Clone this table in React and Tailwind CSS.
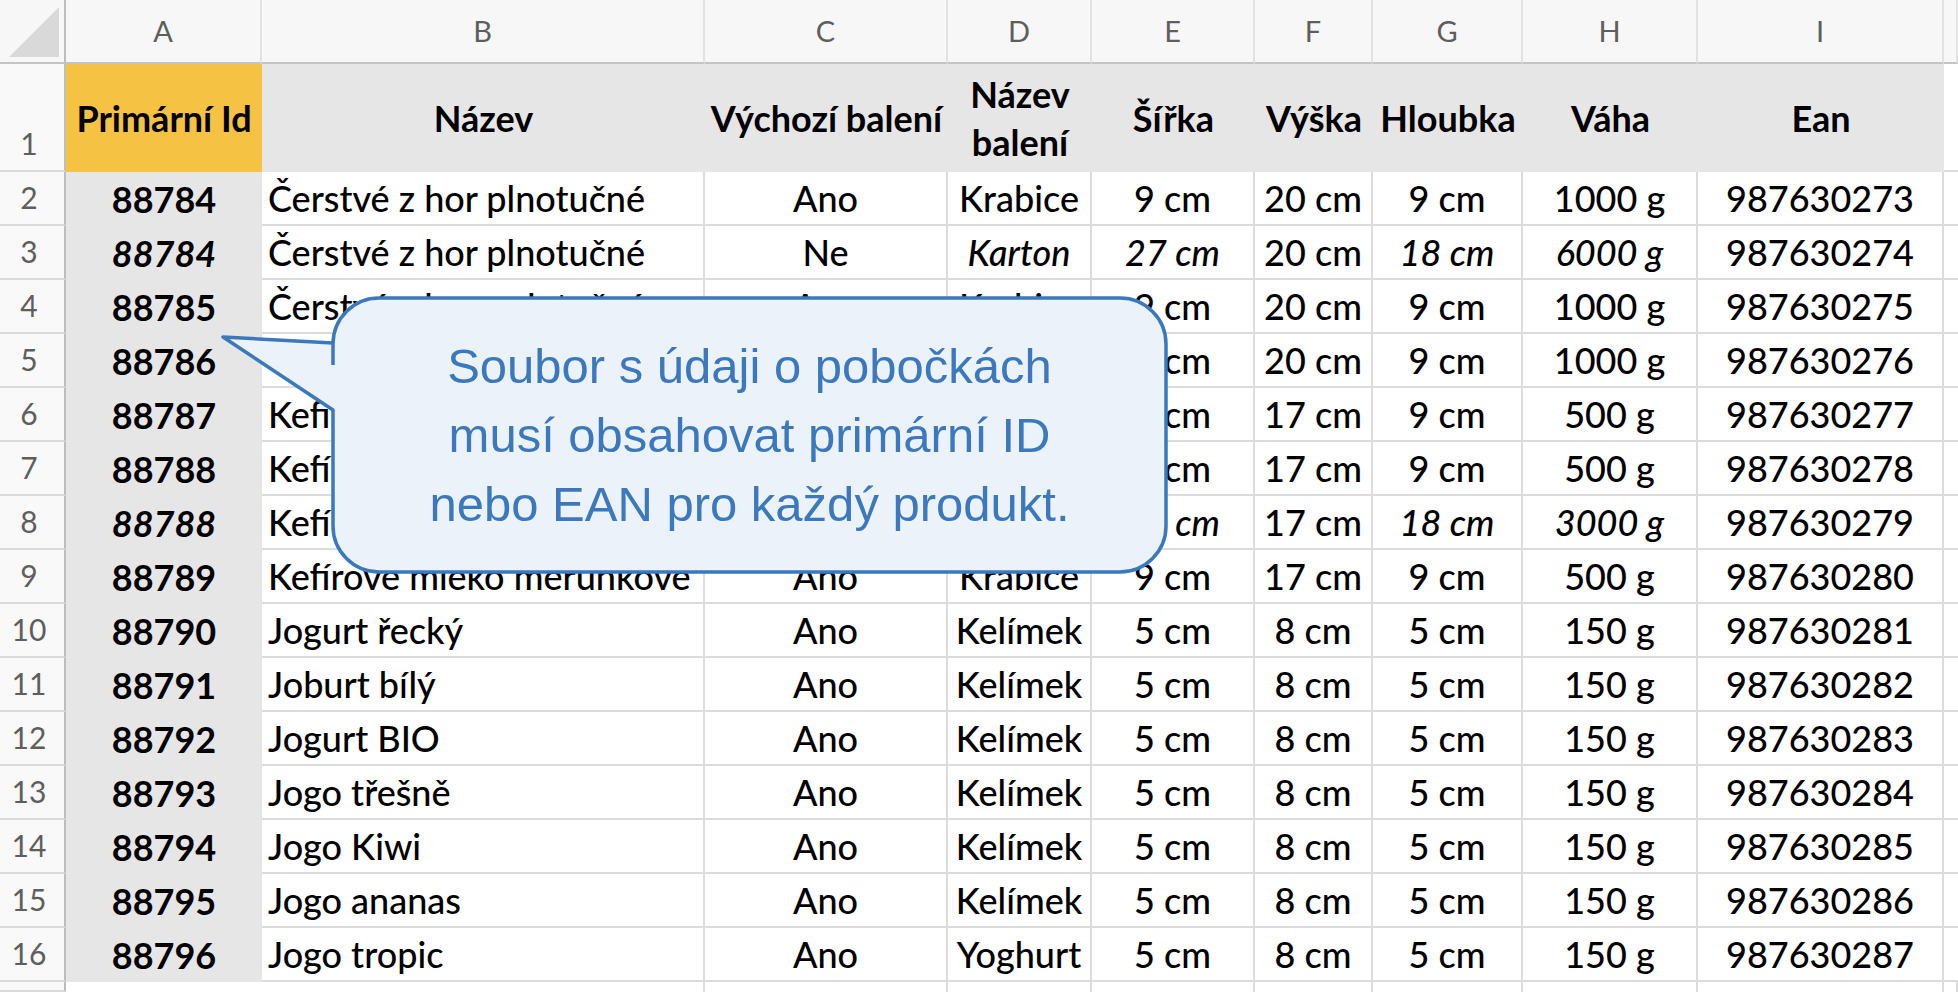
const COLUMNS = ['A', 'B', 'C', 'D', 'E', 'F', 'G', 'H', 'I', ''];

const HEADERS = ['Primární Id', 'Název', 'Výchozí balení', 'Název balení', 'Šířka', 'Výška', 'Hloubka', 'Váha', 'Ean'];

// a leading "*" marks a value that is set in italics
const ROWS = [
  ['88784', 'Čerstvé z hor plnotučné', 'Ano', 'Krabice', '9 cm', '20 cm', '9 cm', '1000 g', '987630273'],
  ['*88784', 'Čerstvé z hor plnotučné', 'Ne', '*Karton', '*27 cm', '20 cm', '*18 cm', '*6000 g', '987630274'],
  ['88785', 'Čerstvé z hor polotučné', 'Ano', 'Krabice', '9 cm', '20 cm', '9 cm', '1000 g', '987630275'],
  ['88786', 'Čerstvé z hor polotučné', 'Ano', 'Krabice', '9 cm', '20 cm', '9 cm', '1000 g', '987630276'],
  ['88787', 'Kefírové mléko bílé', 'Ano', 'Krabice', '9 cm', '17 cm', '9 cm', '500 g', '987630277'],
  ['88788', 'Kefírové mléko jahodové', 'Ano', 'Krabice', '9 cm', '17 cm', '9 cm', '500 g', '987630278'],
  ['*88788', 'Kefírové mléko jahodové', 'Ne', '*Karton', '*27 cm', '17 cm', '*18 cm', '*3000 g', '987630279'],
  ['88789', 'Kefírové mléko meruňkové', 'Ano', 'Krabice', '9 cm', '17 cm', '9 cm', '500 g', '987630280'],
  ['88790', 'Jogurt řecký', 'Ano', 'Kelímek', '5 cm', '8 cm', '5 cm', '150 g', '987630281'],
  ['88791', 'Joburt bílý', 'Ano', 'Kelímek', '5 cm', '8 cm', '5 cm', '150 g', '987630282'],
  ['88792', 'Jogurt BIO', 'Ano', 'Kelímek', '5 cm', '8 cm', '5 cm', '150 g', '987630283'],
  ['88793', 'Jogo třešně', 'Ano', 'Kelímek', '5 cm', '8 cm', '5 cm', '150 g', '987630284'],
  ['88794', 'Jogo Kiwi', 'Ano', 'Kelímek', '5 cm', '8 cm', '5 cm', '150 g', '987630285'],
  ['88795', 'Jogo ananas', 'Ano', 'Kelímek', '5 cm', '8 cm', '5 cm', '150 g', '987630286'],
  ['88796', 'Jogo tropic', 'Ano', 'Yoghurt', '5 cm', '8 cm', '5 cm', '150 g', '987630287'],
];

function CornerCell() {
  return (
    <div className="border-r-2 border-b-2 border-r-[#bdbdbd] border-b-[#c4c4c4] bg-[#f7f7f7]">
      <svg width="64" height="62" viewBox="0 0 64 62">
        <polygon points="9,57 59,57 59,7" fill="#d9d9d9" />
      </svg>
    </div>
  );
}

function RowNumber({ children }) {
  return (
    <div className="flex items-end justify-center border-r-2 border-b-2 border-r-[#bdbdbd] border-b-[#dadada] bg-[#f9f9f9] pr-[6px] pb-[4px] text-[30px] leading-normal text-[#5e5e5e]">
      {children}
    </div>
  );
}

function DataCell({ value, index }) {
  const italic = value.startsWith('*');
  const text = italic ? value.slice(1) : value;

  if (index === 0) {
    return (
      <div className={`flex items-center justify-center bg-[#e7e6e6] font-bold whitespace-nowrap ${italic ? 'italic' : ''}`}>
        {text}
      </div>
    );
  }

  return (
    <div
      className={`flex items-center whitespace-nowrap border-r-2 border-b-2 border-[#dcdcdc] bg-white font-medium ${
        index === 1 ? 'pl-[6px]' : 'justify-center'
      } ${italic ? 'italic' : ''}`}
    >
      {text}
    </div>
  );
}

function Callout() {
  return (
    <>
      <svg className="pointer-events-none absolute top-0 left-0" width="1958" height="992" viewBox="0 0 1958 992">
        <path
          d="M 333 365 V 344 A 46 46 0 0 1 379 298 H 1120 A 46 46 0 0 1 1166 344 V 526 A 46 46 0 0 1 1120 572 H 379 A 46 46 0 0 1 333 526 V 410 L 223 337 L 333 343"
          fill="#ecf2f9"
          stroke="#3b78bd"
          strokeWidth="3.5"
          strokeLinejoin="round"
        />
      </svg>
      <div className="absolute top-[298px] left-[333px] flex h-[274px] w-[833px] items-center justify-center text-center font-['Liberation_Sans',Arial,sans-serif] text-[49px] leading-[69px] text-[#3b78bd]">
        <p>
          Soubor s údaji o pobočkách
          <br />
          musí obsahovat primární ID
          <br />
          nebo EAN pro každý produkt.
        </p>
      </div>
    </>
  );
}

export default function App() {
  return (
    <div className="relative grid h-[992px] w-full grid-cols-[66px_196px_443px_243px_144px_163px_118px_150px_175px_246px_1fr] grid-rows-[64px_108px_repeat(15,54px)_1fr] overflow-hidden bg-white font-['Lato',sans-serif] text-[36px] leading-normal text-black">
      {/* column letters */}
      <CornerCell />
      {COLUMNS.map((letter, i) => (
        <div
          key={`col-${i}`}
          className="flex items-center justify-center border-r-2 border-b-2 border-r-[#e2e2e2] border-b-[#c4c4c4] bg-[#f7f7f7] text-[29px] text-[#5e5e5e]"
        >
          {letter}
        </div>
      ))}

      {/* header row */}
      <RowNumber>1</RowNumber>
      {HEADERS.map((title, i) => (
        <div
          key={title}
          className={`flex items-center justify-center text-center font-bold ${
            i === 0 ? 'bg-[#f5c243] whitespace-nowrap' : 'bg-[#e7e6e6]'
          } ${i === 3 ? 'leading-[48px]' : 'whitespace-nowrap'}`}
        >
          {i === 3 ? (
            <span>
              Název
              <br />
              balení
            </span>
          ) : (
            title
          )}
        </div>
      ))}
      <div className="border-b-2 border-[#dcdcdc] bg-white" />

      {ROWS.map((row, r) => (
        <div key={`row-${r}`} className="contents">
          <RowNumber>{r + 2}</RowNumber>
          {row.map((value, i) => (
            <DataCell key={i} value={value} index={i} />
          ))}
          <div className="border-b-2 border-[#dcdcdc] bg-white" />
        </div>
      ))}

      {/* empty row 17, only its top edge shows */}
      <RowNumber />
      <div className="bg-white" />
      {COLUMNS.slice(1).map((letter, i) => (
        <div key={`last-${i}`} className="border-r-2 border-[#dcdcdc] bg-white" />
      ))}

      <Callout />
    </div>
  );
}
